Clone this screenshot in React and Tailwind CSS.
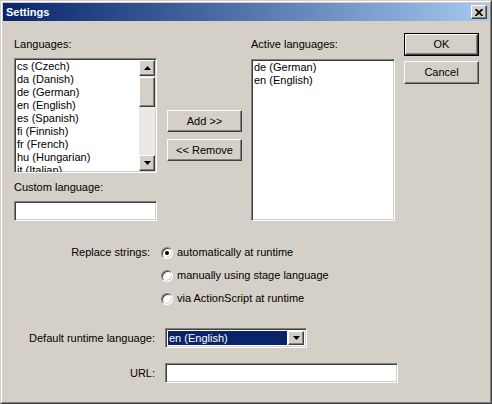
import React from 'react';

const sunken =
  'border border-t-[#808080] border-l-[#808080] border-b-white border-r-white shadow-[inset_1px_1px_0_#404040,inset_-1px_-1px_0_#d4d0c8]';
const raised =
  'border border-t-white border-l-white border-b-[#404040] border-r-[#404040] shadow-[inset_-1px_-1px_0_#808080]';

const languages = [
  'cs (Czech)',
  'da (Danish)',
  'de (German)',
  'en (English)',
  'es (Spanish)',
  'fi (Finnish)',
  'fr (French)',
  'hu (Hungarian)',
  'it (Italian)',
];

const active = ['de (German)', 'en (English)'];

const Arrow = ({ down }) => (
  <svg width="7" height="4" viewBox="0 0 7 4">
    {down ? <polygon points="0,0 7,0 3.5,4" fill="#000" /> : <polygon points="0,4 7,4 3.5,0" fill="#000" />}
  </svg>
);

const Button = ({ children, className = '' }) => (
  <div className={`flex items-center justify-center bg-[#d4d0c8] ${raised} ${className}`}>{children}</div>
);

const Radio = ({ checked, label }) => (
  <div className="flex items-center h-[23px]">
    <div className={`w-3 h-3 rounded-full bg-white flex items-center justify-center ${sunken}`}>
      {checked && <div className="w-1 h-1 rounded-full bg-black" />}
    </div>
    <span className="ml-[4px]">{label}</span>
  </div>
);

const App = () => {
  return (
    <div
      className="w-[492px] h-[404px] bg-[#d4d0c8] text-black text-[11px] leading-[13px] border border-t-[#d4d0c8] border-l-[#d4d0c8] border-b-[#404040] border-r-[#404040]"
      style={{ fontFamily: '"Liberation Sans", Arial, sans-serif' }}
    >
      <div className="h-full border border-t-white border-l-white border-b-[#808080] border-r-[#808080] p-[1px]">
        {/* Title bar */}
        <div className="h-[18px] flex items-center justify-between pl-[3px] pr-[2px] bg-gradient-to-r from-[#0a246a] to-[#a6caf0]">
          <span className="text-white font-bold text-[11px]">Settings</span>
          <Button className="w-4 h-[14px]">
            <svg width="8" height="7" viewBox="0 0 8 7">
              <path d="M0.5 0 L7.5 7 M7.5 0 L0.5 7" stroke="#000" strokeWidth="1.8" />
            </svg>
          </Button>
        </div>

        <div className="pl-[11px]">
          {/* Top row */}
          <div className="flex items-start mt-[12px]">
            {/* Languages */}
            <div className="w-[143px]">
              <div className="mt-[5px] h-[13px]">Languages:</div>
              <div className={`mt-[7px] h-[115px] bg-white flex ${sunken}`}>
                <div className="flex-1 overflow-hidden pl-[2px] pt-[1px]">
                  {languages.map((l) => (
                    <div key={l} className="h-[13px] whitespace-nowrap">{l}</div>
                  ))}
                </div>
                <div className="w-4 my-[1px] mr-[1px] flex flex-col bg-[#ebe9e5]">
                  <Button className="h-4">
                    <Arrow />
                  </Button>
                  <Button className="h-[30px] mt-[1px]" />
                  <div className="flex-1" />
                  <Button className="h-4">
                    <Arrow down />
                  </Button>
                </div>
              </div>
              <div className="mt-[8px] h-[13px]">Custom language:</div>
              <div className={`mt-[7px] h-[20px] bg-white ${sunken}`} />
            </div>

            {/* Add / Remove */}
            <div className="ml-[10px] w-[75px] mt-[77px] flex flex-col gap-[7px]">
              <Button className="h-[22px]">Add &gt;&gt;</Button>
              <Button className="h-[22px]">&lt;&lt; Remove</Button>
            </div>

            {/* Active languages */}
            <div className="ml-[9px] w-[144px]">
              <div className="mt-[5px] h-[13px]">Active languages:</div>
              <div className={`mt-[8px] h-[162px] bg-white pl-[2px] pt-[1px] ${sunken}`}>
                {active.map((l) => (
                  <div key={l} className="h-[13px] whitespace-nowrap">{l}</div>
                ))}
              </div>
            </div>

            {/* OK / Cancel */}
            <div className="ml-[9px] w-[75px] flex flex-col gap-[5px]">
              <div className="h-[23px] border border-black">
                <Button className="h-full">OK</Button>
              </div>
              <Button className="h-[23px]">Cancel</Button>
            </div>
          </div>

          {/* Replace strings */}
          <div className="flex mt-[20px]">
            <div className="w-[136px] text-right h-[23px] flex items-center justify-end">Replace strings:</div>
            <div className="ml-[11px]">
              <Radio checked label="automatically at runtime" />
              <Radio label="manually using stage language" />
              <Radio label="via ActionScript at runtime" />
            </div>
          </div>

          {/* Default runtime language */}
          <div className="flex items-center mt-[18px]">
            <div className="w-[141px] text-right">Default runtime language:</div>
            <div className={`ml-[10px] w-[142px] h-[20px] bg-white flex p-[2px] ${sunken}`}>
              <div className="flex-1 bg-[#0a246a] text-white flex items-center pl-[1px] mr-[1px]">en (English)</div>
              <Button className="w-4">
                <Arrow down />
              </Button>
            </div>
          </div>

          {/* URL */}
          <div className="flex items-center mt-[15px]">
            <div className="w-[141px] text-right">URL:</div>
            <div className={`ml-[10px] w-[233px] h-[20px] bg-white ${sunken}`} />
          </div>
        </div>
      </div>
    </div>
  );
};

export default App;
